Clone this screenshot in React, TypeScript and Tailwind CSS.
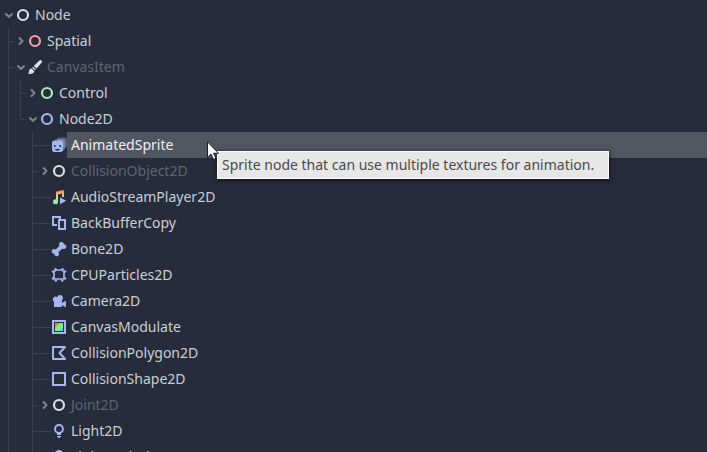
import type { ReactNode } from "react";

type Arrow = "open" | "closed" | null;

type Item = {
  name: string;
  depth: number;
  icon: ReactNode;
  arrow?: Arrow;
  dim?: boolean;
  selected?: boolean;
  last?: boolean;
};

const BLUE = "#a5b7f3";

function Svg({ children }: { children: ReactNode }) {
  return (
    <svg viewBox="0 0 16 16" className="size-4 shrink-0" aria-hidden="true">
      {children}
    </svg>
  );
}

function Ring({ color }: { color: string }) {
  return (
    <Svg>
      <circle cx="8" cy="8" r="5" fill="none" stroke={color} strokeWidth="2.2" />
    </Svg>
  );
}

const icons = {
  brush: (
    <Svg>
      <path d="M13.500 1a1.500 1.500 0 0 1 1.200 2.400L9.700 9.400 6.800 6.900l5.600-5.400A1.500 1.500 0 0 1 13.500 1zM6 7.800l2.900 2.500-.9 1-2.800-2.400zM4.300 9.500l3 2.600c0 2-2 3.200-6.300 2.900 1-.8.8-1.500 1-2.700.2-1.600 1-2.600 2.300-2.800z" fill="#e0e0e0" />
    </Svg>
  ),
  sprite: (
    <Svg>
      <rect x="6" y="0.500" width="10" height="11" rx="3" fill={BLUE} fillOpacity=".4" />
      <rect x="3.500" y="2" width="10.500" height="12" rx="3" fill={BLUE} fillOpacity=".4" />
      <rect x="1" y="3.500" width="11" height="11.500" rx="2.800" fill={BLUE} />
      <path d="M3 8h1.500v2H3zM8.500 8H10v2H8.500zM4 12h5c-.4 1-1.300 1.500-2.500 1.500S4.400 13 4 12z" fill="#262c3b" />
    </Svg>
  ),
  audio: (
    <Svg>
      <defs>
        <linearGradient id="note" x1="0" y1="1" x2="0" y2="15" gradientUnits="userSpaceOnUse">
          <stop offset="0" stopColor="#ff7a7a" />
          <stop offset=".5" stopColor="#e1dc7a" />
          <stop offset="1" stopColor="#66ff9e" />
        </linearGradient>
      </defs>
      <path d="M12 1 5 2.800V10.300A2.500 2.500 0 1 0 7 12.700V5.500l4-1V8h2V2a1 1 0 0 0-1-1z" fill="url(#note)" />
      <path d="M9 8.200v7l6.200-3.500z" fill={BLUE} />
    </Svg>
  ),
  backBuffer: (
    <Svg>
      <path d="M6 10H2V2h7v2M8 5h6v9H8z" fill="none" stroke={BLUE} strokeWidth="2" />
    </Svg>
  ),
  bone: (
    <Svg>
      <path d="M10.500 1a2.400 2.400 0 0 0-2 3.800L4.700 8.600a2.400 2.400 0 1 0-1.500 4.200 2.400 2.400 0 1 0 4.200-1.500l3.900-3.900a2.400 2.400 0 1 0 1.500-4.200A2.400 2.400 0 0 0 10.500 1z" fill={BLUE} />
    </Svg>
  ),
  particles: (
    <Svg>
      <path d="M5 3h6l2 2v6l-1 1H4l-1-1V5z" fill="none" stroke={BLUE} strokeWidth="1.600" strokeLinejoin="round" />
      <g fill={BLUE}>
        <circle cx="4.500" cy="2.200" r="1.200" />
        <circle cx="11.500" cy="2.200" r="1.200" />
        <circle cx="2" cy="4.500" r="1.200" />
        <circle cx="14" cy="4.500" r="1.200" />
        <circle cx="2" cy="11.500" r="1.300" />
        <circle cx="14" cy="11.500" r="1.300" />
        <circle cx="4.800" cy="13.500" r="1.300" />
        <circle cx="11.200" cy="13.500" r="1.300" />
      </g>
    </Svg>
  ),
  camera: (
    <Svg>
      <path d="M9 2a3 3 0 0 0-2.900 2.200A2.500 2.500 0 1 0 3 8.500V13c0 .6.400 1 1 1h6c.6 0 1-.4 1-1v-1l3 2h.900V8H14l-3 2V7.200A3 3 0 0 0 9 2z" fill={BLUE} />
    </Svg>
  ),
  modulate: (
    <Svg>
      <rect x="2" y="2" width="12" height="12" fill="#262c3b" stroke={BLUE} strokeWidth="2" />
      <path d="M4 4h8v8H4z" fill="#70fb70" />
      <path d="M4 4h5L4 9z" fill="#ff7070" />
      <path d="M12 12V7.500L7.500 12z" fill="#70bfff" />
    </Svg>
  ),
  polygon: (
    <Svg>
      <path d="M14 2H2v12h12L8.500 8z" fill="none" stroke={BLUE} strokeWidth="2" strokeLinejoin="round" />
    </Svg>
  ),
  shape: (
    <Svg>
      <rect x="2" y="2" width="12" height="12" fill="none" stroke={BLUE} strokeWidth="2" />
    </Svg>
  ),
  light: (
    <Svg>
      <path d="M8 1a5 5 0 0 0-2 9.500V12h4v-1.500A5 5 0 0 0 8 1zm0 2a3 3 0 1 1 0 6 3 3 0 0 1 0-6zM6 13h4v1H9v1H7v-1H6z" fill={BLUE} fillRule="evenodd" />
    </Svg>
  ),
};

const items: Item[] = [
  { name: "Node", depth: 0, icon: <Ring color="#e0e0e0" />, arrow: "open" },
  { name: "Spatial", depth: 1, icon: <Ring color="#fc9c9c" />, arrow: "closed" },
  { name: "CanvasItem", depth: 1, icon: icons.brush, arrow: "open", dim: true },
  { name: "Control", depth: 2, icon: <Ring color="#a5efac" />, arrow: "closed" },
  { name: "Node2D", depth: 2, icon: <Ring color={BLUE} />, arrow: "open", last: true },
  { name: "AnimatedSprite", depth: 3, icon: icons.sprite, selected: true },
  { name: "CollisionObject2D", depth: 3, icon: <Ring color="#e0e0e0" />, arrow: "closed", dim: true },
  { name: "AudioStreamPlayer2D", depth: 3, icon: icons.audio },
  { name: "BackBufferCopy", depth: 3, icon: icons.backBuffer },
  { name: "Bone2D", depth: 3, icon: icons.bone },
  { name: "CPUParticles2D", depth: 3, icon: icons.particles },
  { name: "Camera2D", depth: 3, icon: icons.camera },
  { name: "CanvasModulate", depth: 3, icon: icons.modulate },
  { name: "CollisionPolygon2D", depth: 3, icon: icons.polygon },
  { name: "CollisionShape2D", depth: 3, icon: icons.shape },
  { name: "Joint2D", depth: 3, icon: <Ring color="#e0e0e0" />, arrow: "closed", dim: true },
  { name: "Light2D", depth: 3, icon: icons.light },
  { name: "LightOccluder2D", depth: 3, icon: icons.light },
];

function Toggle({ arrow, name }: { arrow: Arrow; name: string }) {
  return (
    <button
      type="button"
      aria-label={`${arrow === "open" ? "Collapse" : "Expand"} ${name}`}
      className="flex w-[13px] shrink-0 items-center justify-center"
    >
      <svg viewBox="0 0 12 12" className="size-3 shrink-0" aria-hidden="true">
        <path
          d={arrow === "open" ? "M3 5l3 3 3-3" : "M4.500 3l3 3-3 3"}
          fill="none"
          stroke="#80838c"
          strokeWidth="2"
          strokeLinecap="round"
          strokeLinejoin="round"
        />
      </svg>
    </button>
  );
}

function Row({ item }: { item: Item }) {
  const { name, depth, icon, arrow = null, dim, selected, last } = item;
  const tone = selected ? "bg-[#525661] text-[#f0f0f2]" : dim ? "text-[#60646e]" : "text-[#cdced2]";
  return (
    <li
      role="treeitem"
      aria-level={depth + 1}
      aria-selected={!!selected}
      className={`flex h-[26px] ${depth === 0 ? "pl-[2px]" : "pl-2"}`}
    >
      {depth > 1 && <span className="w-3 shrink-0 border-l border-[#3b404e]" />}
      {depth > 2 && <span className="w-3 shrink-0" />}
      {depth > 0 && (
        <span className={`flex shrink-0 flex-col ${arrow ? "w-[6px]" : "w-[19px]"}`}>
          <span className="h-[14px] border-b border-l border-[#3b404e]" />
          {!last && <span className="grow border-l border-[#3b404e]" />}
        </span>
      )}
      {arrow && <Toggle arrow={arrow} name={name} />}
      <span className="flex items-center">{icon}</span>
      <span className={`grow pl-1 text-sm leading-[26px] whitespace-nowrap ${tone}`}>{name}</span>
    </li>
  );
}

export default function App() {
  return (
    <main className="relative h-screen overflow-hidden bg-[#262c3b] pt-[2px] font-['Noto_Sans',sans-serif]">
      <ul role="tree" aria-label="Node types">
        {items.map((item) => (
          <Row key={item.name} item={item} />
        ))}
      </ul>
      <div
        role="tooltip"
        className="absolute top-[151px] left-[217px] border border-white bg-[#e7e7e8] pr-[14px] pl-1 text-sm leading-[26px] whitespace-nowrap text-[#4a4a48] shadow-[0_1px_4px_1px_rgba(0,0,0,0.5)]"
      >
        Sprite node that can use multiple textures for animation.
      </div>
      <svg viewBox="0 0 12 19" className="absolute top-[141px] left-[207px] h-[19px] w-3" aria-hidden="true">
        <path d="M.5.800v15.700l3.600-3.400 2.400 5.300 2.400-1.100-2.300-5H11.500z" fill="#fff" stroke="#1b1d28" strokeWidth="1" />
      </svg>
    </main>
  );
}
